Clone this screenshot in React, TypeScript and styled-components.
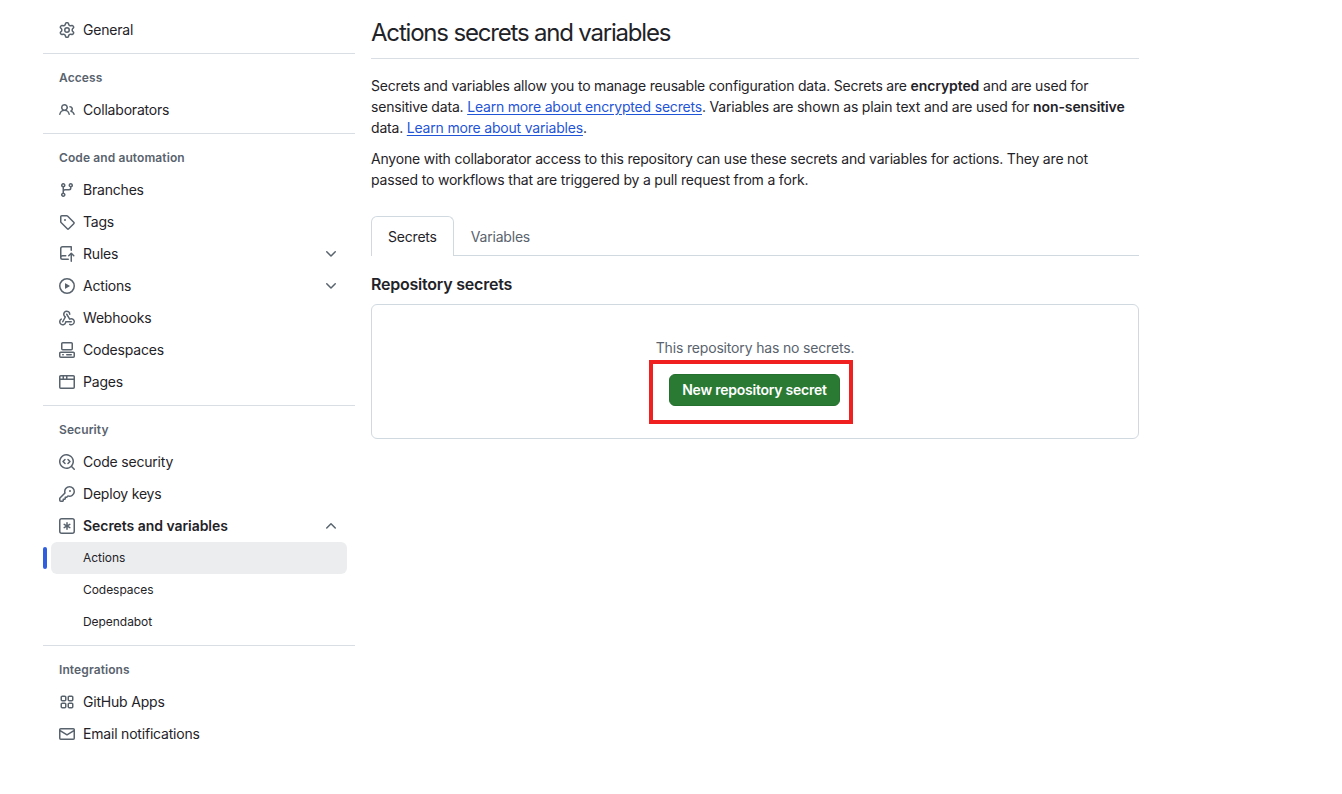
import React from 'react';
import styled, { createGlobalStyle } from 'styled-components';

const GlobalStyle = createGlobalStyle`
  html, body {
    margin: 0;
    padding: 0;
    background: #ffffff;
    color: #1f2328;
    font-family: Inter, "Liberation Sans", sans-serif;
    font-size: 14px;
    -webkit-font-smoothing: antialiased;
  }
`;

const Page = styled.div`
  display: flex;
  align-items: flex-start;
  gap: 16px;
  width: 1342px;
  height: 794px;
  padding: 14px 0 0 43px;
  box-sizing: border-box;
  overflow: hidden;
`;

const Sidebar = styled.nav`
  width: 312px;
  flex: none;
`;

const Divider = styled.div`
  height: 1px;
  background: #d8dee4;
  margin: 7px 0 8px;
`;

const SectionLabel = styled.div`
  height: 32px;
  padding: 0 16px;
  display: flex;
  align-items: center;
  font-size: 12px;
  line-height: 18px;
  font-weight: 600;
  letter-spacing: 0.1px;
  color: #59636e;
  box-sizing: border-box;
`;

const Row = styled.div<{ $active?: boolean; $sub?: boolean; $strong?: boolean }>`
  position: relative;
  height: 32px;
  margin: 0 8px;
  padding: 0 8px;
  display: flex;
  align-items: center;
  gap: 8px;
  border-radius: 6px;
  box-sizing: border-box;
  background: ${(p) => (p.$active ? '#ebedef' : 'transparent')};
  font-size: ${(p) => (p.$sub ? '12px' : '14px')};
  font-weight: ${(p) => (p.$strong ? 600 : 400)};
  letter-spacing: ${(p) => (p.$sub ? '-0.05px' : p.$strong ? '-0.05px' : '-0.2px')};
  color: #1f2328;
  padding-left: ${(p) => (p.$sub ? '32px' : '8px')};
  line-height: 20px;

  svg {
    flex: none;
    color: #59636e;
  }

  ${(p) =>
    p.$active &&
    `&::before {
      content: '';
      position: absolute;
      left: -8px;
      top: 5px;
      width: 4px;
      height: 22px;
      border-radius: 6px;
      background: #2f5fdf;
    }`}
`;

const Chevron = styled.span`
  margin-left: auto;
  display: flex;
  align-items: center;
`;

const Main = styled.main`
  width: 768px;
  flex: none;
`;

const Title = styled.h1`
  margin: 0 0 16px;
  height: 45px;
  padding-top: 3px;
  box-sizing: border-box;
  border-bottom: 1px solid #d8dee4;
  font-size: 24px;
  line-height: 32px;
  font-weight: 400;
  letter-spacing: -1.19px;
  color: #1f2328;
`;

const Para = styled.p`
  margin: 0 0 10px;
  padding-right: 8px;
  font-size: 14px;
  line-height: 21px;
  letter-spacing: -0.19px;
  color: #1f2328;

  strong {
    font-weight: 600;
    letter-spacing: -0.1px;
    white-space: nowrap;
  }
`;

const DocLink = styled.a`
  color: #1f55d6;
  text-decoration: underline;
  text-underline-offset: 2px;
`;

const Tabs = styled.div`
  display: flex;
  margin-top: 26px;
  height: 39px;
  border-bottom: 1px solid #d1d9e0;
`;

const Tab = styled.div<{ $selected?: boolean }>`
  padding: 0 16px;
  display: flex;
  align-items: center;
  font-size: 14px;
  letter-spacing: -0.2px;
  box-sizing: border-box;
  color: ${(p) => (p.$selected ? '#1f2328' : '#59636e')};
  background: ${(p) => (p.$selected ? '#ffffff' : 'transparent')};
  border: 1px solid ${(p) => (p.$selected ? '#d1d9e0' : 'transparent')};
  border-bottom: 0;
  border-radius: 6px 6px 0 0;
  height: ${(p) => (p.$selected ? '40px' : '39px')};
`;

const SectionTitle = styled.h2`
  margin: 16px 0 8px;
  font-size: 16px;
  line-height: 24px;
  font-weight: 600;
  letter-spacing: -0.22px;
  color: #1f2328;
`;

const EmptyBox = styled.div`
  height: 135px;
  box-sizing: border-box;
  border: 1px solid #d1d9e0;
  border-radius: 6px;
  padding-top: 33px;
  display: flex;
  flex-direction: column;
  align-items: center;
`;

const EmptyText = styled.div`
  font-size: 14px;
  line-height: 20px;
  letter-spacing: -0.17px;
  color: #59636e;
  margin-bottom: 16px;
`;

const ButtonWrap = styled.div`
  position: relative;
  margin-right: 1px;
`;

const PrimaryButton = styled.button`
  display: block;
  height: 32px;
  width: 171px;
  padding: 0;
  border: 1px solid #26702f;
  border-radius: 6px;
  background: #2a7a33;
  color: #ffffff;
  font-family: inherit;
  font-size: 14px;
  font-weight: 600;
  line-height: 20px;
  letter-spacing: -0.24px;
`;

const Highlight = styled.div`
  position: absolute;
  left: -20px;
  top: -14px;
  width: 204px;
  height: 64px;
  box-sizing: border-box;
  border: 4px solid #f02020;
  pointer-events: none;
`;

const octicons = {
  gear: ['M8 0a8.2 8.2 0 0 1 .701.031C9.444.095 9.99.645 10.16 1.29l.288 1.107c.018.066.079.158.212.224.231.114.454.243.668.386.123.082.233.09.299.071l1.103-.303c.644-.176 1.392.021 1.82.63.27.385.506.792.704 1.218.315.675.111 1.422-.364 1.891l-.814.806c-.049.048-.098.147-.088.294.016.257.016.515 0 .772-.01.147.038.246.088.294l.814.806c.475.469.679 1.216.364 1.891a7.977 7.977 0 0 1-.704 1.217c-.428.61-1.176.807-1.82.63l-1.102-.302c-.067-.019-.177-.011-.3.071a5.909 5.909 0 0 1-.668.386c-.133.066-.194.158-.211.224l-.29 1.106c-.168.646-.715 1.196-1.458 1.26a8.006 8.006 0 0 1-1.402 0c-.743-.064-1.289-.614-1.458-1.26l-.289-1.106c-.018-.066-.079-.158-.212-.224a5.738 5.738 0 0 1-.668-.386c-.123-.082-.233-.09-.299-.071l-1.103.303c-.644.176-1.392-.021-1.82-.63a8.12 8.12 0 0 1-.704-1.218c-.315-.675-.111-1.422.363-1.891l.815-.806c.05-.048.098-.147.088-.294a6.214 6.214 0 0 1 0-.772c.01-.147-.038-.246-.088-.294l-.815-.806C.635 6.045.431 5.298.746 4.623a7.92 7.92 0 0 1 .704-1.217c.428-.61 1.176-.807 1.82-.63l1.102.302c.067.019.177.011.3-.071.214-.143.437-.272.668-.386.133-.066.194-.158.211-.224l.29-1.106C6.009.645 6.556.095 7.299.03 7.53.01 7.764 0 8 0Zm-.571 1.525c-.036.003-.108.036-.137.146l-.289 1.105c-.147.561-.549.967-.998 1.189-.173.086-.34.183-.5.29-.417.278-.97.423-1.529.27l-1.103-.303c-.109-.03-.175.016-.195.045-.22.312-.412.644-.573.99-.014.031-.021.11.059.19l.815.806c.411.406.562.957.53 1.456a4.709 4.709 0 0 0 0 .582c.032.499-.119 1.05-.53 1.456l-.815.806c-.081.08-.073.159-.059.19.162.346.353.677.573.989.02.03.085.076.195.046l1.102-.303c.56-.153 1.113-.008 1.53.27.161.107.328.204.501.29.447.222.85.629.997 1.189l.289 1.105c.029.109.101.143.137.146a6.6 6.6 0 0 0 1.142 0c.036-.003.108-.036.137-.146l.289-1.105c.147-.561.549-.967.998-1.189.173-.086.34-.183.5-.29.417-.278.97-.423 1.529-.27l1.103.303c.109.029.175-.016.195-.045.22-.313.411-.644.573-.99.014-.031.021-.11-.059-.19l-.815-.806c-.411-.406-.562-.957-.53-1.456a4.709 4.709 0 0 0 0-.582c-.032-.499.119-1.05.53-1.456l.815-.806c.081-.08.073-.159.059-.19a6.464 6.464 0 0 0-.573-.989c-.02-.03-.085-.076-.195-.046l-1.102.303c-.56.153-1.113.008-1.53-.27a4.44 4.44 0 0 0-.501-.29c-.447-.222-.85-.629-.997-1.189l-.289-1.105c-.029-.11-.101-.143-.137-.146a6.6 6.6 0 0 0-1.142 0ZM11 8a3 3 0 1 1-6 0 3 3 0 0 1 6 0ZM9.5 8a1.5 1.5 0 1 0-3.001.001A1.5 1.5 0 0 0 9.5 8Z'],
  people: ['M2 5.5a3.5 3.5 0 1 1 5.898 2.549 5.508 5.508 0 0 1 3.034 4.084.75.75 0 1 1-1.482.235 4 4 0 0 0-7.9 0 .75.75 0 0 1-1.482-.236A5.507 5.507 0 0 1 3.102 8.05 3.493 3.493 0 0 1 2 5.5ZM11 4a3.001 3.001 0 0 1 2.22 5.018 5.01 5.01 0 0 1 2.56 3.012.749.749 0 0 1-.885.954.752.752 0 0 1-.549-.514 3.507 3.507 0 0 0-2.522-2.372.75.75 0 0 1-.574-.73v-.352a.75.75 0 0 1 .416-.672A1.5 1.5 0 0 0 11 5.5.75.75 0 0 1 11 4Zm-5.5-.5a2 2 0 1 0-.001 3.999A2 2 0 0 0 5.5 3.5Z'],
  branch: ['M9.5 3.25a2.25 2.25 0 1 1 3 2.122V6A2.5 2.5 0 0 1 10 8.5H6a1 1 0 0 0-1 1v1.128a2.251 2.251 0 1 1-1.5 0V5.372a2.25 2.25 0 1 1 1.5 0v1.836A2.493 2.493 0 0 1 6 7h4a1 1 0 0 0 1-1v-.628A2.25 2.25 0 0 1 9.5 3.25Zm-6 0a.75.75 0 1 0 1.5 0 .75.75 0 0 0-1.5 0Zm8.25-.75a.75.75 0 1 0 0 1.5.75.75 0 0 0 0-1.5ZM4.25 12a.75.75 0 1 0 0 1.5.75.75 0 0 0 0-1.5Z'],
  tag: ['M1 7.775V2.75C1 1.784 1.784 1 2.75 1h5.025c.464 0 .91.184 1.238.513l6.25 6.25a1.75 1.75 0 0 1 0 2.474l-5.026 5.026a1.75 1.75 0 0 1-2.474 0l-6.25-6.25A1.752 1.752 0 0 1 1 7.775Zm1.5 0c0 .066.026.13.073.177l6.25 6.25a.25.25 0 0 0 .354 0l5.025-5.025a.25.25 0 0 0 0-.354l-6.25-6.25a.25.25 0 0 0-.177-.073H2.75a.25.25 0 0 0-.25.25ZM6 5a1 1 0 1 1 0 2 1 1 0 0 1 0-2Z'],
  repoPush: ['M1 2.5A2.5 2.5 0 0 1 3.5 0h8.75a.75.75 0 0 1 .75.75v3.5a.75.75 0 0 1-1.5 0V1.5h-8a1 1 0 0 0-1 1v6.708A2.493 2.493 0 0 1 3.5 9h3.25a.75.75 0 0 1 0 1.5H3.5a1 1 0 0 0 0 2h5.75a.75.75 0 0 1 0 1.5H3.5A2.5 2.5 0 0 1 1 11.5Zm13.23 7.79h-.001l-1.224-1.224v6.184a.75.75 0 0 1-1.5 0V9.066L10.28 10.29a.75.75 0 0 1-1.06-1.061l2.505-2.504a.75.75 0 0 1 1.06 0L15.29 9.23a.751.751 0 0 1-.018 1.042.751.751 0 0 1-1.042.018Z'],
  play: ['M8 0a8 8 0 1 1 0 16A8 8 0 0 1 8 0ZM1.5 8a6.5 6.5 0 1 0 13 0 6.5 6.5 0 0 0-13 0Zm4.879-2.773 4.264 2.559a.25.25 0 0 1 0 .428l-4.264 2.559A.25.25 0 0 1 6 10.559V5.442a.25.25 0 0 1 .379-.215Z'],
  webhook: [
    'M5.5 4.25a2.25 2.25 0 0 1 4.5 0 .75.75 0 0 0 1.5 0 3.75 3.75 0 1 0-6.14 2.889l-2.272 4.258a.75.75 0 0 0 1.324.706L7 7.25a.75.75 0 0 0-.309-1.015A2.25 2.25 0 0 1 5.5 4.25Z',
    'M7.364 3.607a.75.75 0 0 1 1.03.257l2.608 4.349a3.75 3.75 0 1 1-.628 6.785.75.75 0 0 1 .752-1.299 2.25 2.25 0 1 0-.033-3.88.75.75 0 0 1-1.03-.256L7.107 4.636a.75.75 0 0 1 .257-1.03Z',
    'M2.9 8.776A.75.75 0 0 1 2.625 9.8 2.25 2.25 0 1 0 6 11.75a.75.75 0 0 1 .75-.751h5.5a.75.75 0 0 1 0 1.5H7.425a3.751 3.751 0 1 1-5.55-3.998.75.75 0 0 1 1.024.274Z',
  ],
  codespaces: [
    'M0 11.25c0-.966.784-1.75 1.75-1.75h12.5c.966 0 1.75.784 1.75 1.75v3A1.75 1.75 0 0 1 14.25 16H1.75A1.75 1.75 0 0 1 0 14.25Zm2-9.5C2 .784 2.784 0 3.75 0h8.5C13.216 0 14 .784 14 1.75v5a1.75 1.75 0 0 1-1.75 1.75h-8.5A1.75 1.75 0 0 1 2 6.75Zm1.75-.25a.25.25 0 0 0-.25.25v5c0 .138.112.25.25.25h8.5a.25.25 0 0 0 .25-.25v-5a.25.25 0 0 0-.25-.25Zm-2 9.5a.25.25 0 0 0-.25.25v3c0 .138.112.25.25.25h12.5a.25.25 0 0 0 .25-.25v-3a.25.25 0 0 0-.25-.25Z',
    'M7 12.75a.75.75 0 0 1 .75-.75h4.5a.75.75 0 0 1 0 1.5h-4.5a.75.75 0 0 1-.75-.75Zm-4 0a.75.75 0 0 1 .75-.75h.5a.75.75 0 0 1 0 1.5h-.5a.75.75 0 0 1-.75-.75Z',
  ],
  browser: ['M0 2.75C0 1.784.784 1 1.75 1h12.5c.966 0 1.75.784 1.75 1.75v10.5A1.75 1.75 0 0 1 14.25 15H1.75A1.75 1.75 0 0 1 0 13.25ZM14.5 6h-13v7.25c0 .138.112.25.25.25h12.5a.25.25 0 0 0 .25-.25Zm-6-3.5v2h6V2.75a.25.25 0 0 0-.25-.25ZM5 2.5v2h2v-2Zm-3.25 0a.25.25 0 0 0-.25.25V4.5h2v-2Z'],
  codescan: [
    'M8.47 4.97a.75.75 0 0 0 0 1.06L9.94 7.5 8.47 8.97a.75.75 0 1 0 1.06 1.06l2-2a.75.75 0 0 0 0-1.06l-2-2a.75.75 0 0 0-1.06 0ZM6.53 6.03a.75.75 0 0 0-1.06-1.06l-2 2a.75.75 0 0 0 0 1.06l2 2a.75.75 0 1 0 1.06-1.06L5.06 7.5l1.47-1.47Z',
    'M12.246 13.307a7.501 7.501 0 1 1 1.06-1.06l2.474 2.473a.749.749 0 0 1-.326 1.275.749.749 0 0 1-.734-.215ZM1.5 7.5a6.002 6.002 0 0 0 3.608 5.504 6.002 6.002 0 0 0 6.486-1.117.748.748 0 0 1 .292-.293A6 6 0 1 0 1.5 7.5Z',
  ],
  key: ['M10.5 0a5.499 5.499 0 1 1-1.288 10.848l-.932.932a.749.749 0 0 1-.53.22H7v.75a.749.749 0 0 1-.22.53l-.5.5a.749.749 0 0 1-.53.22H5v.75a.749.749 0 0 1-.22.53l-.5.5a.749.749 0 0 1-.53.22h-2A1.75 1.75 0 0 1 0 14.25v-2c0-.199.079-.389.22-.53l4.932-4.932A5.5 5.5 0 0 1 10.5 0Zm-4 5.5c-.001.431.069.86.205 1.269a.75.75 0 0 1-.181.768L1.5 12.56v1.69c0 .138.112.25.25.25h1.69l.06-.06v-1.19a.75.75 0 0 1 .75-.75h1.19l.06-.06v-1.19a.75.75 0 0 1 .75-.75h1.19l1.023-1.025a.75.75 0 0 1 .768-.18A4 4 0 1 0 6.5 5.5ZM11 6a1 1 0 1 1 0-2 1 1 0 0 1 0 2Z'],
  keyAsterisk: [
    'M0 2.75A2.75 2.75 0 0 1 2.75 0h10.5A2.75 2.75 0 0 1 16 2.75v10.5A2.75 2.75 0 0 1 13.25 16H2.75A2.75 2.75 0 0 1 0 13.25ZM2.75 1.5c-.69 0-1.25.56-1.25 1.25v10.5c0 .69.56 1.25 1.25 1.25h10.5c.69 0 1.25-.56 1.25-1.25V2.75c0-.69-.56-1.25-1.25-1.25Z',
    'M8 4a.75.75 0 0 1 .75.75V6.7l1.69-.975a.75.75 0 0 1 .75 1.3L9.5 8l1.69.975a.75.75 0 0 1-.75 1.3L8.75 9.3v1.95a.75.75 0 0 1-1.5 0V9.3l-1.69.975a.75.75 0 0 1-.75-1.3L6.5 8l-1.69-.975a.75.75 0 0 1 .75-1.3L7.25 6.7V4.75A.75.75 0 0 1 8 4Z',
  ],
  apps: ['M1.5 3.25c0-.966.784-1.75 1.75-1.75h2.5c.966 0 1.75.784 1.75 1.75v2.5A1.75 1.75 0 0 1 5.75 7.5h-2.5A1.75 1.75 0 0 1 1.5 5.75Zm7 0c0-.966.784-1.75 1.75-1.75h2.5c.966 0 1.75.784 1.75 1.75v2.5a1.75 1.75 0 0 1-1.75 1.75h-2.5A1.75 1.75 0 0 1 8.5 5.75Zm-7 7c0-.966.784-1.75 1.75-1.75h2.5c.966 0 1.75.784 1.75 1.75v2.5a1.75 1.75 0 0 1-1.75 1.75h-2.5a1.75 1.75 0 0 1-1.75-1.75Zm7 0c0-.966.784-1.75 1.75-1.75h2.5c.966 0 1.75.784 1.75 1.75v2.5a1.75 1.75 0 0 1-1.75 1.75h-2.5a1.75 1.75 0 0 1-1.75-1.75ZM3.25 3a.25.25 0 0 0-.25.25v2.5c0 .138.112.25.25.25h2.5A.25.25 0 0 0 6 5.75v-2.5A.25.25 0 0 0 5.75 3Zm7 0a.25.25 0 0 0-.25.25v2.5c0 .138.112.25.25.25h2.5a.25.25 0 0 0 .25-.25v-2.5a.25.25 0 0 0-.25-.25Zm-7 7a.25.25 0 0 0-.25.25v2.5c0 .138.112.25.25.25h2.5a.25.25 0 0 0 .25-.25v-2.5a.25.25 0 0 0-.25-.25Zm7 0a.25.25 0 0 0-.25.25v2.5c0 .138.112.25.25.25h2.5a.25.25 0 0 0 .25-.25v-2.5a.25.25 0 0 0-.25-.25Z'],
  mail: ['M1.75 2h12.5c.966 0 1.75.784 1.75 1.75v8.5A1.75 1.75 0 0 1 14.25 14H1.75A1.75 1.75 0 0 1 0 12.25v-8.5C0 2.784.784 2 1.75 2ZM1.5 12.251c0 .138.112.25.25.25h12.5a.25.25 0 0 0 .25-.25V5.809L8.38 9.397a.75.75 0 0 1-.76 0L1.5 5.809v6.442Zm13-8.181v-.32a.25.25 0 0 0-.25-.25H1.75a.25.25 0 0 0-.25.25v.32L8 7.88Z'],
  chevronDown: ['M12.78 5.22a.749.749 0 0 1 0 1.06l-4.25 4.25a.749.749 0 0 1-1.06 0L3.22 6.28a.749.749 0 1 1 1.06-1.06L8 8.939l3.72-3.719a.749.749 0 0 1 1.06 0Z'],
  chevronUp: ['M3.22 10.53a.749.749 0 0 1 0-1.06l4.25-4.25a.749.749 0 0 1 1.06 0l4.25 4.25a.749.749 0 0 1-1.06 1.06L8 6.811 4.28 10.53a.749.749 0 0 1-1.06 0Z'],
};

type IconName = keyof typeof octicons;

const Octicon = ({ name }: { name: IconName }) => (
  <svg width="16" height="16" viewBox="0 0 16 16" fill="currentColor">
    {octicons[name].map((d) => (
      <path key={d} d={d} />
    ))}
  </svg>
);

type NavItem = { icon: IconName; label: string; chevron?: boolean };

const codeItems: NavItem[] = [
  { icon: 'branch', label: 'Branches' },
  { icon: 'tag', label: 'Tags' },
  { icon: 'repoPush', label: 'Rules', chevron: true },
  { icon: 'play', label: 'Actions', chevron: true },
  { icon: 'webhook', label: 'Webhooks' },
  { icon: 'codespaces', label: 'Codespaces' },
  { icon: 'browser', label: 'Pages' },
];

const NavRow = ({ icon, label, chevron }: NavItem) => (
  <Row>
    <Octicon name={icon} />
    {label}
    {chevron && (
      <Chevron>
        <Octicon name="chevronDown" />
      </Chevron>
    )}
  </Row>
);

export default function App() {
  return (
    <Page>
      <GlobalStyle />
      <Sidebar>
        <NavRow icon="gear" label="General" />
        <Divider />
        <SectionLabel>Access</SectionLabel>
        <NavRow icon="people" label="Collaborators" />
        <Divider />
        <SectionLabel>Code and automation</SectionLabel>
        {codeItems.map((item) => (
          <NavRow key={item.label} {...item} />
        ))}
        <Divider />
        <SectionLabel>Security</SectionLabel>
        <NavRow icon="codescan" label="Code security" />
        <NavRow icon="key" label="Deploy keys" />
        <Row $strong>
          <Octicon name="keyAsterisk" />
          Secrets and variables
          <Chevron>
            <Octicon name="chevronUp" />
          </Chevron>
        </Row>
        <Row $sub $active>Actions</Row>
        <Row $sub>Codespaces</Row>
        <Row $sub>Dependabot</Row>
        <Divider />
        <SectionLabel>Integrations</SectionLabel>
        <NavRow icon="apps" label="GitHub Apps" />
        <NavRow icon="mail" label="Email notifications" />
      </Sidebar>
      <Main>
        <Title>Actions secrets and variables</Title>
        <Para>
          Secrets and variables allow you to manage reusable configuration data. Secrets are{' '}
          <strong>encrypted</strong> and are used for sensitive data.{' '}
          <DocLink>Learn more about encrypted secrets</DocLink>. Variables are shown as plain text
          and are used for <strong>non-sensitive</strong> data.{' '}
          <DocLink>Learn more about variables</DocLink>.
        </Para>
        <Para>
          Anyone with collaborator access to this repository can use these secrets and variables
          for actions. They are not passed to workflows that are triggered by a pull request from a
          fork.
        </Para>
        <Tabs>
          <Tab $selected>Secrets</Tab>
          <Tab>Variables</Tab>
        </Tabs>
        <SectionTitle>Repository secrets</SectionTitle>
        <EmptyBox>
          <EmptyText>This repository has no secrets.</EmptyText>
          <ButtonWrap>
            <PrimaryButton>New repository secret</PrimaryButton>
            <Highlight />
          </ButtonWrap>
        </EmptyBox>
      </Main>
    </Page>
  );
}
